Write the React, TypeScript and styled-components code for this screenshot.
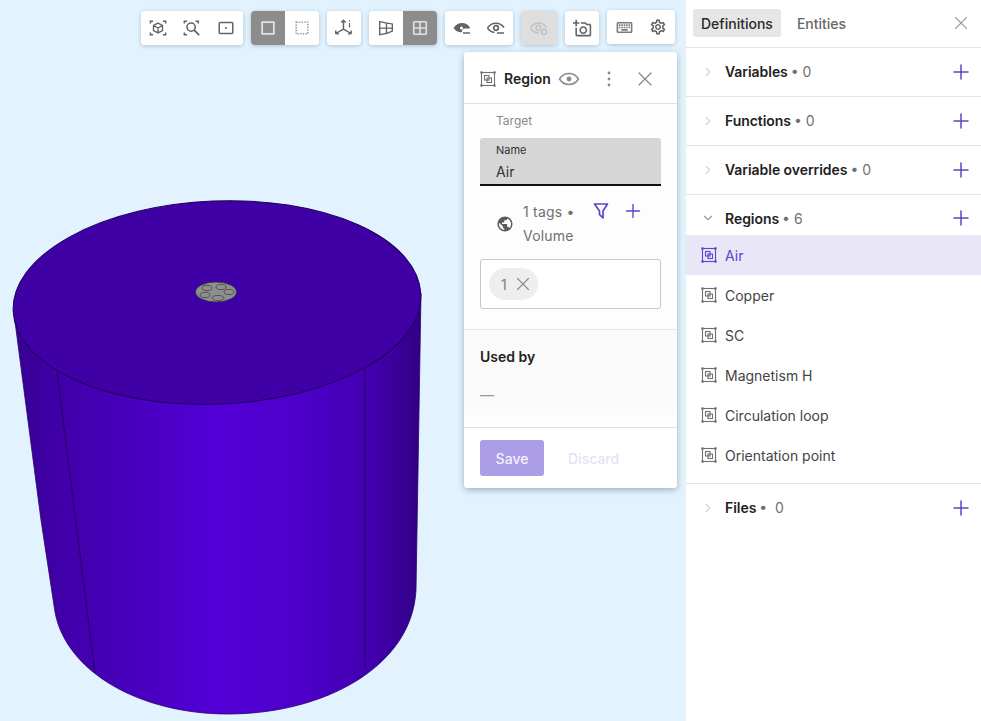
import React from "react";
import styled, { createGlobalStyle } from "styled-components";
import { ChevronDown, ChevronRight, Plus, X } from "lucide-react";
import { MdPublic, MdOutlineAddAPhoto, MdOutlineKeyboard, MdOutlineSettings } from "react-icons/md";

const Global = createGlobalStyle`
  html, body { margin: 0; padding: 0; height: 100%; overflow: hidden; }
  body { font-family: Inter, "Liberation Sans", sans-serif; font-size: 14px; color: #222; }
  #root { height: 100%; }
  * { box-sizing: border-box; }
`;

const Page = styled.div`
  display: flex;
  width: 981px;
  height: 721px;
`;
const Viewport = styled.main`
  position: relative;
  width: 685px;
  height: 721px;
  background: #e2f3ff;
  overflow: hidden;
`;
const Scene = styled.svg`
  position: absolute;
  left: 0;
  top: 0;
`;
const Toolbar = styled.div`
  position: relative;
  display: flex;
  gap: 8px;
  padding: 11px 10px 0 141px;
`;
const ToolGroup = styled.div<{ $raised?: boolean }>`
  display: flex;
  height: 34px;
  border-radius: 4px;
  overflow: hidden;
  background: #fff;
  box-shadow: 0 1px 4px rgba(40, 60, 90, 0.28);
  margin-top: ${(p) => (p.$raised ? "-1px" : "0")};
`;
const ToolButton = styled.div<{ $active?: boolean; $disabled?: boolean }>`
  width: ${(p) => (p.$disabled ? "36px" : "34px")};
  height: 34px;
  display: flex;
  align-items: center;
  justify-content: center;
  background: ${(p) => (p.$active ? "#8c8c8c" : p.$disabled ? "#dedede" : "#fff")};
  color: ${(p) => (p.$active ? "#e0e0e0" : p.$disabled ? "#c2c2c2" : "#636363")};
`;

const Panel = styled.section`
  position: absolute;
  left: 464px;
  top: 52px;
  width: 213px;
  height: 436px;
  background: #fff;
  border-radius: 3px;
  box-shadow: 0 2px 6px rgba(30, 50, 80, 0.35);
  display: flex;
  flex-direction: column;
`;
const PanelHeader = styled.header`
  height: 52px;
  flex: none;
  display: flex;
  align-items: center;
  padding: 2px 0 0 16px;
  border-bottom: 1px solid #e2e2e2;
  color: #707070;
`;
const PanelTitle = styled.span`
  font-weight: 600;
  color: #222;
  margin-left: 8px;
`;
const HeaderIconSlot = styled.span<{ $left: number }>`
  display: flex;
  margin-left: ${(p) => p.$left}px;
  color: #8a8a8a;
`;
const PanelBody = styled.div`
  height: 226px;
  flex: none;
  padding: 9px 16px 0;
  background: #fdfdfd;
  border-bottom: 1px solid #e6e6e6;
`;
const TargetLabel = styled.div`
  font-size: 12px;
  line-height: 15px;
  color: #8a8a8a;
  padding-left: 16px;
`;
const NameField = styled.div`
  margin-top: 10px;
  height: 48px;
  background: #d6d6d6;
  border-bottom: 2px solid #111;
  border-radius: 3px 3px 0 0;
  padding: 5px 16px 0;
`;
const NameLabel = styled.div`
  font-size: 11px;
  line-height: 14px;
  color: #333;
`;
const NameValue = styled.div`
  font-size: 14px;
  line-height: 18px;
  margin-top: 6px;
  color: #333;
`;
const TagsRow = styled.div`
  display: flex;
  padding: 15px 0 0 16px;
  height: 73px;
`;
const GlobeSlot = styled.span`
  display: flex;
  align-self: flex-start;
  margin: 14px 9px 0 0;
  color: #5c5c5c;
`;
const TagsText = styled.div`
  width: 64px;
  line-height: 23.5px;
  color: #707070;
  letter-spacing: 0.2px;
  margin-top: -1px;
`;
const TagAction = styled.span<{ $left: number; $top: number }>`
  display: flex;
  align-self: flex-start;
  margin: ${(p) => p.$top}px 0 0 ${(p) => p.$left}px;
  color: #5a45c8;
`;
const TagBox = styled.div`
  height: 50px;
  border: 1px solid #c8c8c8;
  border-radius: 3px;
  padding: 8px;
  background: #fff;
`;
const Chip = styled.span`
  display: inline-flex;
  align-items: center;
  height: 32px;
  width: 49px;
  padding-left: 12px;
  gap: 5px;
  border-radius: 16px;
  background: #eeeeee;
  color: #808080;
  & svg { color: #8c8c8c; }
`;
const UsedBy = styled.div`
  height: 98px;
  flex: none;
  padding: 18px 16px 0;
  background: linear-gradient(#fafafa 0, #fafafa 75%, #fff 100%);
  border-bottom: 1px solid #e2e2e2;
`;
const UsedTitle = styled.div`
  font-weight: 600;
  line-height: 17px;
  color: #222;
`;
const UsedValue = styled.div`
  margin-top: 21px;
  line-height: 17px;
  color: #999;
`;
const PanelFooter = styled.footer`
  display: flex;
  align-items: center;
  padding: 12px 16px 0;
  gap: 24px;
`;
const SaveButton = styled.div`
  width: 64px;
  height: 36px;
  border-radius: 3px;
  background: #ab9de6;
  color: #f4f2fd;
  font-weight: 500;
  display: flex;
  align-items: center;
  justify-content: center;
`;
const DiscardButton = styled.div`
  color: #e5e2f6;
  font-weight: 500;
`;

const Sidebar = styled.aside`
  width: 296px;
  height: 721px;
  background: #fff;
  box-shadow: inset 1px 0 0 #ededed;
`;
const Tabs = styled.div`
  height: 48px;
  display: flex;
  align-items: flex-start;
  padding: 9px 0 0 8px;
  border-bottom: 1px solid #e4e4e4;
`;
const Tab = styled.div<{ $active?: boolean }>`
  height: 28px;
  padding: 0 8px;
  margin-right: 8px;
  border-radius: 3px;
  line-height: 29px;
  font-weight: 500;
  background: ${(p) => (p.$active ? "#e6e6e6" : "transparent")};
  color: ${(p) => (p.$active ? "#2a2a2a" : "#666")};
`;
const TabsClose = styled.span`
  margin: 3px 0 0 auto;
  padding-right: 9px;
  display: flex;
  color: #a0a0a0;
`;
const SectionRow = styled.div<{ $flat?: boolean; $height?: number; $pad?: string }>`
  height: ${(p) => p.$height ?? 49}px;
  display: flex;
  align-items: center;
  padding: ${(p) => p.$pad ?? "0 0 1px 16px"};
  border-bottom: ${(p) => (p.$flat ? "none" : "1px solid #e4e4e4")};
`;
const Chevron = styled.span<{ $open?: boolean }>`
  display: flex;
  width: 24px;
  flex: none;
  color: ${(p) => (p.$open ? "#9a9a9a" : "#d4d4d4")};
`;
const SectionTitle = styled.span`
  font-weight: 600;
  color: #222;
  letter-spacing: -0.05px;
`;
const SectionCount = styled.span`
  margin-left: 3px;
  color: #707070;
  white-space: pre;
`;
const AddSlot = styled.span`
  margin-left: auto;
  padding-right: 8px;
  display: flex;
  color: #5a45c8;
`;
const ItemList = styled.div`
  padding-bottom: 8px;
  border-bottom: 1px solid #e4e4e4;
`;
const Item = styled.div<{ $active?: boolean }>`
  height: 40px;
  display: flex;
  align-items: center;
  gap: 8px;
  padding-left: 16px;
  background: ${(p) => (p.$active ? "#e9e6f8" : "transparent")};
  color: ${(p) => (p.$active ? "#5a45c8" : "#444")};
  & svg { color: ${(p) => (p.$active ? "#5a45c8" : "#707070")}; }
`;

type IconProps = { size?: number };
const Svg = ({ size = 18, children }: IconProps & { children: React.ReactNode }) => (
  <svg width={size} height={size} viewBox="0 0 20 20" fill="none" stroke="currentColor" strokeWidth={1.5}>
    {children}
  </svg>
);
const RegionIcon = ({ size = 16 }: IconProps) => (
  <svg width={size} height={size} viewBox="0 0 16 16" fill="none" stroke="currentColor" strokeWidth={1.1}>
    <rect x="1.5" y="1.5" width="13" height="13" />
    <rect x="4.5" y="4.5" width="4.5" height="4.5" />
    <rect x="7" y="7" width="4.5" height="4.5" />
    <g fill="currentColor" stroke="none">
      <rect x="0.3" y="0.3" width="2.4" height="2.4" rx="0.8" />
      <rect x="13.3" y="0.3" width="2.4" height="2.4" rx="0.8" />
      <rect x="0.3" y="13.3" width="2.4" height="2.4" rx="0.8" />
      <rect x="13.3" y="13.3" width="2.4" height="2.4" rx="0.8" />
    </g>
  </svg>
);
const FitCube = () => (
  <Svg>
    <path d="M1.5 5V2.5h3M15.5 2.5h3V5M1.5 15v2.5h3M15.5 17.5h3V15" strokeWidth={1.7} />
    <path d="M10 4.5l5 2.7v5.6l-5 2.7-5-2.7V7.2zM5 7.2l5 2.8 5-2.8M10 10v5.5" />
  </Svg>
);
const ZoomRegion = () => (
  <Svg>
    <path d="M1.5 5V2.5h3M14 2.5h3V5M1.5 15v2.5h3" strokeWidth={1.7} />
    <circle cx="9" cy="9" r="4.6" strokeWidth={1.7} />
    <path d="M12.4 12.4l5.6 5.6" strokeWidth={2} />
  </Svg>
);
const FrameDot = () => (
  <Svg>
    <rect x="2.5" y="4" width="15" height="12" rx="1" strokeWidth={1.7} />
    <circle cx="10" cy="10" r="1.1" fill="currentColor" stroke="none" />
  </Svg>
);
const SolidSquare = () => (
  <Svg>
    <rect x="3.5" y="3.5" width="13" height="13" strokeWidth={2} />
  </Svg>
);
const DashedSquare = () => (
  <Svg>
    <rect x="3.5" y="3.5" width="13" height="13" strokeDasharray="1.6 1.4" strokeWidth={1.5} opacity={0.75} />
  </Svg>
);
const Axes = () => (
  <Svg size={22}>
    <path d="M9.5 11V3M7.500 5l2-2 2 2M9.500 11l-7 4M2.500 12.300V15l2.800.5M9.500 11l7 4M16.500 12.300V15l-2.800.5" strokeWidth={1.3} />
    <path d="M15 3v1M15 5.500v4" strokeWidth={1.1} />
  </Svg>
);
const PerspectiveBox = () => (
  <Svg>
    <path d="M3 3l8 1.500 6 1v8l-6 2.500-8 1.500zM10.500 4.500v11.800M3 10.500l7.500-.7 6.500.7" />
  </Svg>
);
const GridSquare = () => (
  <Svg>
    <rect x="3" y="3" width="14" height="14" rx="1" strokeWidth={1.8} />
    <path d="M10 3v14M3 10h14" strokeWidth={1.8} />
  </Svg>
);
const EyeDash = ({ filled }: { filled?: boolean }) => (
  <Svg size={20}>
    {filled ? (
      <>
        <path
          d="M1.500 10C3.700 6.600 6.700 5 10 5c3.200 0 6 1.500 8 4.300l-.5 1.200H13a3 3 0 0 0-3 3.700C6.500 14.500 3.600 13 1.500 10z"
          fill="currentColor"
          stroke="none"
        />
        <circle cx="9.500" cy="10" r="1.500" fill="#fff" stroke="none" />
      </>
    ) : (
      <>
        <path d="M1.500 10C3.700 6.600 6.700 5.200 10 5.200c3.200 0 6 1.400 8 4.300M1.500 10c1.900 2.800 4.300 4.200 7 4.500" />
        <circle cx="10" cy="10" r="2.300" strokeWidth={1.7} />
      </>
    )}
    <path d="M11 15h7" strokeWidth={1.6} />
  </Svg>
);
const EyeOff = () => (
  <Svg size={20}>
    <path d="M1.500 10C3.500 6.500 6.500 5 9.500 5c3.300 0 6.200 1.700 8 4.500M1.500 10c1.800 3 4.800 4.800 8 4.800" />
    <circle cx="9.500" cy="10" r="2.400" />
    <circle cx="15" cy="14" r="2.400" />
  </Svg>
);
const EyeOutline = () => (
  <svg width="22" height="22" viewBox="0 0 22 22" fill="none" stroke="currentColor" strokeWidth={1.5}>
    <path d="M1.500 11C4 7 7.200 5.500 11 5.500S18 7 20.500 11C18 15 14.800 16.500 11 16.500S4 15 1.500 11z" />
    <circle cx="11" cy="11" r="2.400" fill="currentColor" stroke="none" />
  </svg>
);
const DotsV = () => (
  <svg width="4" height="16" viewBox="0 0 4 16" fill="currentColor">
    <circle cx="2" cy="2" r="1.400" />
    <circle cx="2" cy="8" r="1.400" />
    <circle cx="2" cy="14" r="1.400" />
  </svg>
);
const Funnel = () => (
  <svg width="16" height="18" viewBox="0 0 16 18" fill="none" stroke="currentColor" strokeWidth={1.7} strokeLinejoin="round">
    <path d="M1.500 2h13L10 9v7L6.500 12.500V9z" />
  </svg>
);

const Cylinder = () => (
  <Scene width="685" height="721" viewBox="0 0 685 721">
    <defs>
      <linearGradient id="wall" x1="0" x2="1" y1="0" y2="0">
        <stop offset="0" stopColor="#37008f" />
        <stop offset="0.1" stopColor="#3f00a6" />
        <stop offset="0.3" stopColor="#4800bd" />
        <stop offset="0.5" stopColor="#5300d8" />
        <stop offset="0.72" stopColor="#4c00c8" />
        <stop offset="0.88" stopColor="#4200ae" />
        <stop offset="1" stopColor="#300083" />
      </linearGradient>
    </defs>
    <path
      d="M13.500 310L41 520 55 612C66 672 140 714 228 714 322 714 412 668 416 590L421 293Z"
      fill="url(#wall)"
      stroke="#2a0070"
      strokeWidth="0.8"
    />
    <path d="M57 372L95 673M365 362V668" stroke="#240060" strokeWidth="1" fill="none" />
    <ellipse cx="217" cy="302.500" rx="204" ry="101.500" transform="rotate(-2.400 217 302.500)" fill="#3f00a6" stroke="#1f0058" strokeWidth="1" />
    <ellipse cx="216" cy="292" rx="20.500" ry="10" fill="#8f8f8f" stroke="#333" strokeWidth="0.8" />
    <g fill="none" stroke="#3a3a3a" strokeWidth="0.7">
      <ellipse cx="207" cy="288" rx="5" ry="2.600" />
      <ellipse cx="221" cy="287" rx="5" ry="2.600" />
      <ellipse cx="229" cy="292" rx="5" ry="2.600" />
      <ellipse cx="205" cy="295" rx="5" ry="2.600" />
      <ellipse cx="218" cy="298" rx="6" ry="2.600" />
    </g>
  </Scene>
);

const sections = ["Variables", "Functions", "Variable overrides"];
const regions = ["Air", "Copper", "SC", "Magnetism H", "Circulation loop", "Orientation point"];

export default function App() {
  return (
    <Page>
      <Global />
      <Viewport>
        <Cylinder />
        <Toolbar>
          <ToolGroup>
            <ToolButton><FitCube /></ToolButton>
            <ToolButton><ZoomRegion /></ToolButton>
            <ToolButton><FrameDot /></ToolButton>
          </ToolGroup>
          <ToolGroup>
            <ToolButton $active><SolidSquare /></ToolButton>
            <ToolButton><DashedSquare /></ToolButton>
          </ToolGroup>
          <ToolGroup>
            <ToolButton><Axes /></ToolButton>
          </ToolGroup>
          <ToolGroup>
            <ToolButton><PerspectiveBox /></ToolButton>
            <ToolButton $active><GridSquare /></ToolButton>
          </ToolGroup>
          <ToolGroup>
            <ToolButton><EyeDash filled /></ToolButton>
            <ToolButton><EyeDash /></ToolButton>
          </ToolGroup>
          <ToolGroup>
            <ToolButton $disabled><EyeOff /></ToolButton>
          </ToolGroup>
          <ToolGroup>
            <ToolButton><MdOutlineAddAPhoto size={19} /></ToolButton>
          </ToolGroup>
          <ToolGroup $raised>
            <ToolButton><MdOutlineKeyboard size={19} color="#7a7a7a" /></ToolButton>
            <ToolButton><MdOutlineSettings size={18} /></ToolButton>
          </ToolGroup>
        </Toolbar>
        <Panel>
          <PanelHeader>
            <RegionIcon />
            <PanelTitle>Region</PanelTitle>
            <HeaderIconSlot $left={7}><EyeOutline /></HeaderIconSlot>
            <HeaderIconSlot $left={27}><DotsV /></HeaderIconSlot>
            <HeaderIconSlot $left={22}><X size={24} strokeWidth={1.3} /></HeaderIconSlot>
          </PanelHeader>
          <PanelBody>
            <TargetLabel>Target</TargetLabel>
            <NameField>
              <NameLabel>Name</NameLabel>
              <NameValue>Air</NameValue>
            </NameField>
            <TagsRow>
              <GlobeSlot><MdPublic size={18} /></GlobeSlot>
              <TagsText>1 tags • Volume</TagsText>
              <TagAction $left={6} $top={1}><Funnel /></TagAction>
              <TagAction $left={13} $top={-1}><Plus size={22} strokeWidth={1.5} /></TagAction>
            </TagsRow>
            <TagBox>
              <Chip>1<X size={22} strokeWidth={1.2} /></Chip>
            </TagBox>
          </PanelBody>
          <UsedBy>
            <UsedTitle>Used by</UsedTitle>
            <UsedValue>—</UsedValue>
          </UsedBy>
          <PanelFooter>
            <SaveButton>Save</SaveButton>
            <DiscardButton>Discard</DiscardButton>
          </PanelFooter>
        </Panel>
      </Viewport>
      <Sidebar>
        <Tabs>
          <Tab $active>Definitions</Tab>
          <Tab>Entities</Tab>
          <TabsClose><X size={22} strokeWidth={1.3} /></TabsClose>
        </Tabs>
        {sections.map((s) => (
          <SectionRow key={s}>
            <Chevron><ChevronRight size={14} /></Chevron>
            <SectionTitle>{s}</SectionTitle>
            <SectionCount>• 0</SectionCount>
            <AddSlot><Plus size={24} strokeWidth={1.5} /></AddSlot>
          </SectionRow>
        ))}
        <SectionRow $flat $height={40} $pad="6px 0 0 16px">
          <Chevron $open><ChevronDown size={14} /></Chevron>
          <SectionTitle>Regions</SectionTitle>
          <SectionCount>• 6</SectionCount>
          <AddSlot><Plus size={24} strokeWidth={1.5} /></AddSlot>
        </SectionRow>
        <ItemList>
          {regions.map((r, i) => (
            <Item key={r} $active={i === 0}>
              <RegionIcon />
              {r}
            </Item>
          ))}
        </ItemList>
        <SectionRow $flat $pad="0 0 2px 16px">
          <Chevron><ChevronRight size={14} /></Chevron>
          <SectionTitle>Files</SectionTitle>
          <SectionCount>•  0</SectionCount>
          <AddSlot><Plus size={24} strokeWidth={1.5} /></AddSlot>
        </SectionRow>
      </Sidebar>
    </Page>
  );
}
